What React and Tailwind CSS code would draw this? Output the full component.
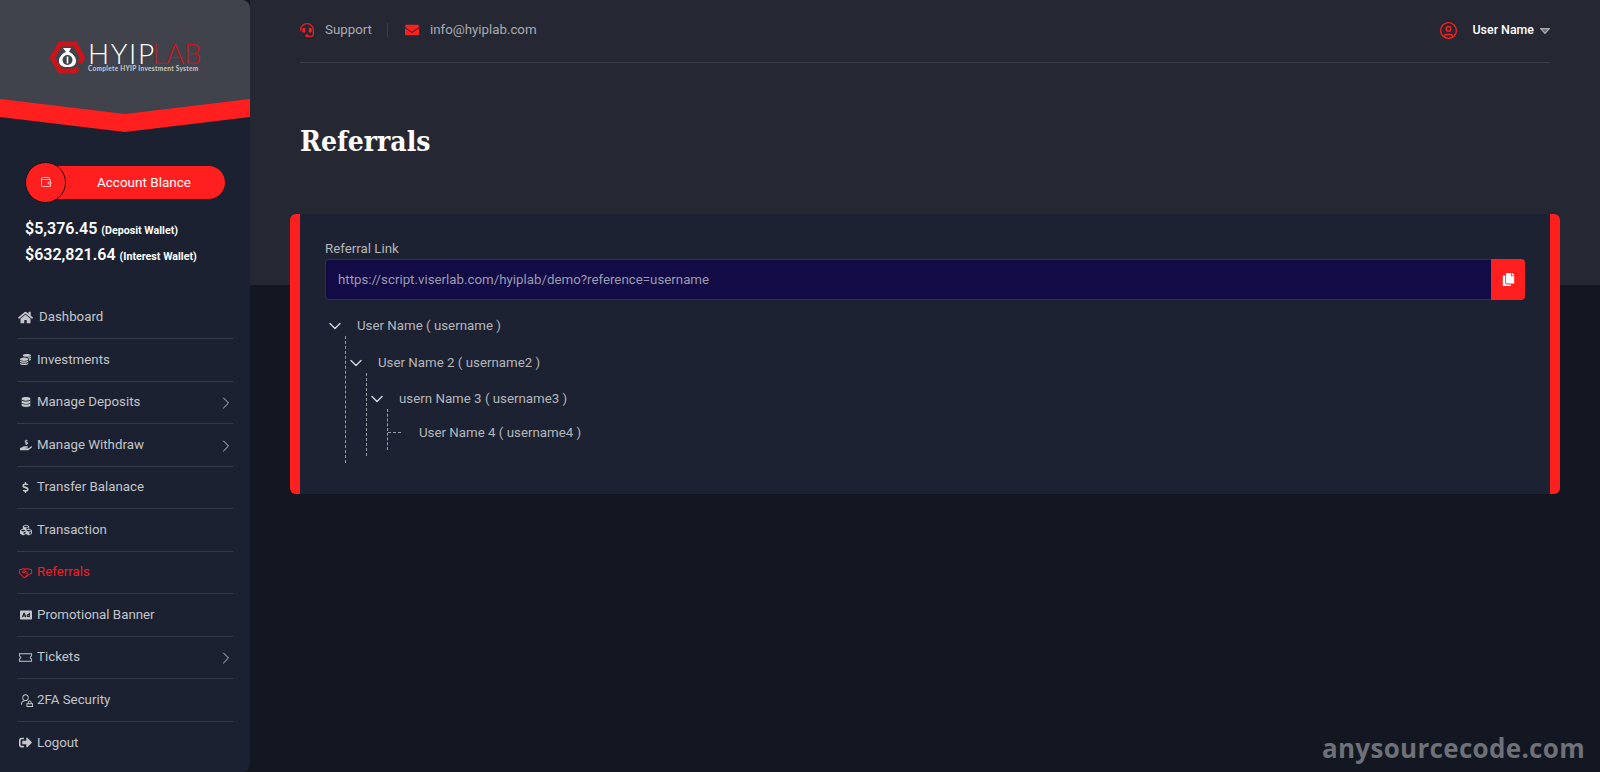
import {
  FaHome, FaCoins, FaDatabase, FaHandHoldingUsd, FaDollarSign, FaCubes, FaAd,
  FaSignOutAlt, FaCopy, FaEnvelope, FaHeadset,
} from "react-icons/fa";
import { LiaHandshakeSolid, LiaTicketAltSolid, LiaUserLockSolid } from "react-icons/lia";
import { ChevronDown, ChevronRight, CircleUser, Wallet } from "lucide-react";

const menu = [
  { label: "Dashboard", icon: FaHome, size: 15, text: "ml-[2px]" },
  { label: "Investments", icon: FaCoins, size: 11 },
  { label: "Manage Deposits", icon: FaDatabase, size: 10, arrow: true },
  { label: "Manage Withdraw", icon: FaHandHoldingUsd, size: 12, arrow: true },
  { label: "Transfer Balanace", icon: FaDollarSign, size: 11 },
  { label: "Transaction", icon: FaCubes, size: 12 },
  { label: "Referrals", icon: LiaHandshakeSolid, size: 15, active: true },
  { label: "Promotional Banner", icon: FaAd, size: 12 },
  { label: "Tickets", icon: LiaTicketAltSolid, size: 15, arrow: true },
  { label: "2FA Security", icon: LiaUserLockSolid, size: 15 },
  { label: "Logout", icon: FaSignOutAlt, size: 13 },
];

const Logo = () => (
  <div className="flex items-start pl-[50px] pt-[41px]">
    <svg width="35" height="33" viewBox="0 0 35 33" className="shrink-0">
      <path d="M28 27 L24.5 30 H10 L2.5 16.5 L10 3 H25 L32.5 16.5 L29.5 22" fill="none" stroke="#c8141a" strokeWidth="5" />
      <path d="M13 7 H21 L19 11 C24 13 26 17 26 20 C26 24 23 26 17.5 26 C12 26 9 24 9 20 C9 17 11 13 16 11 Z" fill="#fff" />
      <circle cx="17.5" cy="19" r="5" fill="#3f424a" />
      <rect x="16.7" y="15.5" width="1.6" height="7" fill="#fff" />
    </svg>
    <div className="ml-[3px] flex flex-col font-['Lato',sans-serif]">
      <div className="mt-[1px] flex h-[22px] items-center text-[28px] leading-[22px] font-light">
        <span className="w-[64px] tracking-[1.6px] text-white">HYIP</span>
        <span className="tracking-[-0.4px] text-[#c8141a]">LAB</span>
      </div>
      <span className="mt-[1px] text-[6.5px] leading-[8px] font-bold tracking-[0.3px] whitespace-nowrap text-[#c9cbce]">
        Complete HYIP Investment System
      </span>
    </div>
  </div>
);

const Sidebar = () => (
  <aside className="flex h-[772px] w-[250px] shrink-0 flex-col overflow-hidden rounded-r-lg bg-[#1b2130]">
    <div className="relative h-[132px] shrink-0">
      <svg className="absolute inset-0" width="250" height="132" viewBox="0 0 250 132">
        <polygon points="0,0 250,0 250,100 125,115 0,100" fill="#40434b" />
        <polygon points="0,99 125,114 250,99 250,117 125,132 0,117" fill="#ff1f1f" />
      </svg>
      <div className="relative">
        <Logo />
      </div>
    </div>

    <div className="mt-[30px] ml-[25px] flex h-[40px] w-[200px] items-center">
      <div className="z-10 flex h-[41px] w-[41px] shrink-0 items-center justify-center rounded-full border border-[#10131c] bg-[#ff1f1f] text-[#ffe4ec]">
        <Wallet size={12} strokeWidth={1.6} />
      </div>
      <div className="ml-[-20px] flex h-[33px] flex-1 items-center justify-center rounded-r-full bg-[#ff1f1f] pl-[17px] text-[13.5px] text-white">
        Account Blance
      </div>
    </div>

    <div className="mt-[17px] ml-[25px] flex flex-col gap-[6px] whitespace-nowrap text-white">
      <p className="h-[20px] text-[16px] leading-[20px] font-semibold">
        $5,376.45 <span className="text-[10.7px] font-bold">(Deposit Wallet)</span>
      </p>
      <p className="h-[20px] text-[16px] leading-[20px] font-semibold">
        $632,821.64 <span className="text-[10.7px] font-bold">(Interest Wallet)</span>
      </p>
    </div>

    <nav className="mt-[31.5px] px-[17px]">
      {menu.map((item, i) => {
        const Icon = item.icon;
        return (
          <a
            key={item.label}
            className={
              "flex h-[42.5px] items-center border-[#363a47] text-[13.3px] " +
              (i < menu.length - 1 ? "border-b " : "") +
              (item.active ? "text-[#ee2027]" : "text-[#c4c6ca]")
            }
          >
            <span className="flex w-[20px] shrink-0 justify-center pr-[3px]">
              <Icon size={item.size} />
            </span>
            <span className={"flex-1 " + (item.text || "")}>{item.label}</span>
            {item.arrow && <ChevronRight size={20} strokeWidth={1.2} className="mr-[-3px] mt-[2px]" />}
          </a>
        );
      })}
    </nav>
  </aside>
);

const TopBar = () => (
  <div className="flex h-[63px] items-center border-b border-[#3b3e49] pb-[2px] text-[13.3px] text-[#a9abb1]">
    <FaHeadset size={14} className="text-[#ee2027]" />
    <span className="ml-[11px]">Support</span>
    <span className="ml-[15px] h-[14px] border-l border-[#3b3e49]" />
    <FaEnvelope size={14} className="ml-[17px] text-[#ff1f1f]" />
    <span className="ml-[11px]">info@hyiplab.com</span>
    <div className="ml-auto flex items-center">
      <CircleUser size={19} strokeWidth={1.7} className="text-[#ff1f1f]" />
      <span className="ml-[15px] text-[12.4px] font-medium text-white">User Name</span>
      <svg width="10" height="6" viewBox="0 0 10 6" className="mt-[1px] ml-[6px]">
        <path d="M0.7 0.6 H9.3 L5 5.4 Z" fill="#6b6e76" stroke="#a9abb1" strokeWidth="1.2" />
      </svg>
    </div>
  </div>
);

const TreeRow = ({ label }) => (
  <div className="flex h-[20px] items-center text-[13.3px] text-[#b5b7bc]">
    <ChevronDown size={20} strokeWidth={1.8} className="shrink-0 text-[#d0d2d5]" />
    <span className="ml-[12px]">{label}</span>
  </div>
);

const Branch = ({ pb, pt, children }) => (
  <ul className={"ml-[20px] border-l border-dashed border-[#9a9ca3] " + pb}>
    <li className={pt}>{children}</li>
  </ul>
);

const ReferralTree = () => (
  <div className="mt-[16px]">
    <TreeRow label="User Name ( username )" />
    <Branch pt="pt-[16.5px]" pb="pb-[7px]">
      <TreeRow label="User Name 2 ( username2 )" />
      <Branch pt="pt-[16px]" pb="pb-[6px]">
        <TreeRow label="usern Name 3 ( username3 )" />
        <Branch pt="pt-[14px]" pb="pb-[7px]">
          <div className="flex h-[20px] items-center text-[13.3px] text-[#b5b7bc]">
            <span className="w-[13px] border-t border-dashed border-[#9a9ca3]" />
            <span className="ml-[18px]">User Name 4 ( username4 )</span>
          </div>
        </Branch>
      </Branch>
    </Branch>
  </div>
);

const ReferralCard = () => (
  <section className="mx-[-10px] mt-[53px] rounded-md border-x-[10px] border-[#ff1f1f] bg-[#1c2231] px-[25px] pt-[27px] pb-[31px]">
    <label className="block h-[16px] text-[13.3px] leading-[16px] text-[#b5b7bc]">Referral Link</label>
    <div className="mt-[2px] flex h-[41px]">
      <div className="flex flex-1 items-center rounded-l border border-r-0 border-[#2d3243] bg-[#130b45] px-[12px] text-[13.3px] text-[#9a9bb0]">
        https://script.viserlab.com/hyiplab/demo?reference=username
      </div>
      <button className="flex w-[34px] items-center justify-center rounded-r bg-[#ff1f1f] text-white">
        <FaCopy size={13} />
      </button>
    </div>
    <ReferralTree />
  </section>
);

export default function App() {
  return (
    <div className="relative flex h-[772px] w-[1600px] overflow-hidden bg-[#131722] font-['Roboto',sans-serif]">
      <Sidebar />
      <main className="min-w-0 flex-1 bg-[linear-gradient(#252833_285px,#131722_285px)] pr-[50px] pl-[50px]">
        <TopBar />
        <h1 className="mt-[60px] h-[38px] font-['DejaVu_Serif_Condensed',serif] text-[28px] leading-[38px] font-bold text-white">Referrals</h1>
        <ReferralCard />
      </main>
      <span className="absolute right-[15px] bottom-[6px] font-['Open_Sans',sans-serif] text-[26px] leading-[36px] font-bold tracking-[0.3px] text-[#6e7178]">
        anysourcecode.com
      </span>
    </div>
  );
}
